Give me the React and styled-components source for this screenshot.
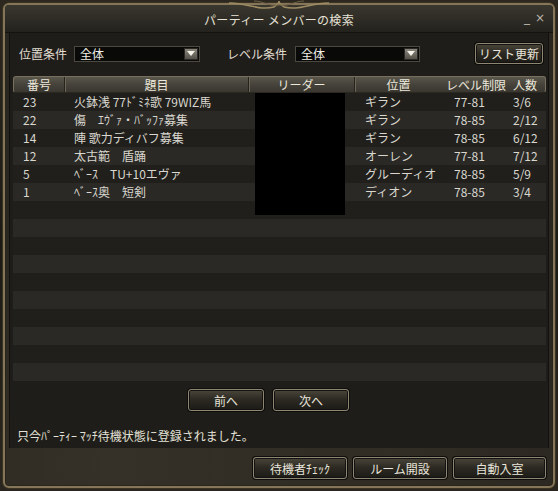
import React from "react";
import styled, { createGlobalStyle } from "styled-components";

const GlobalStyle = createGlobalStyle`
  html, body { margin: 0; padding: 0; background: #14120f; }
  body { font-family: "Noto Sans CJK JP", "Noto Sans", sans-serif; }
  * { box-sizing: border-box; }
`;

const Window = styled.div`
  width: 558px;
  height: 491px;
  padding: 3px;
  background: linear-gradient(180deg, #2c2820 0%, #1c1a15 50%, #2a261f 100%);
  position: relative;
`;

const Frame = styled.div`
  height: 100%;
  border: 2px solid #85765a;
  border-radius: 6px;
  box-shadow: inset 0 0 0 1px #2a251b, 0 0 0 1px #3a3222;
  display: flex;
  flex-direction: column;
  background:
    radial-gradient(ellipse at 20% 95%, rgba(90, 80, 60, 0.25), transparent 40%),
    radial-gradient(ellipse at 70% 92%, rgba(80, 70, 50, 0.2), transparent 40%),
    #2a2721;
`;

const TitleBar = styled.div`
  height: 28px;
  flex: none;
  display: flex;
  align-items: center;
  justify-content: center;
  position: relative;
  background: linear-gradient(180deg, #3a372f 0%, #24221d 100%);
  border-bottom: 1px solid #15130f;
  border-radius: 4px 4px 0 0;
`;

const Title = styled.div`
  color: #e6e2d6;
  font-size: 12px;
  letter-spacing: 0.3px;
  padding-top: 2px;
`;

const Ornament = styled.svg`
  position: absolute;
  left: 50%;
  top: -6px;
  transform: translateX(-50%);
`;

const WinControls = styled.div`
  position: absolute;
  right: 8px;
  top: 6px;
  display: flex;
  gap: 5px;
  align-items: flex-end;
  color: #b9b5a9;
  font-family: "DejaVu Sans", sans-serif;
  font-size: 12px;
  line-height: 14px;
`;

const Panel = styled.div`
  margin: 0 4px;
  height: 415px;
  flex: none;
  background: #1e1d1a;
  display: flex;
  flex-direction: column;
  border-left: 1px solid #121110;
  border-right: 1px solid #121110;
`;

const FilterRow = styled.div`
  display: flex;
  align-items: center;
  padding: 10px 5px 0 9px;
  height: 31px;
  flex: none;
`;

const Label = styled.span`
  color: #e2ded2;
  font-size: 12px;
  margin-left: ${(p) => p.$ml || 0}px;
  margin-right: ${(p) => p.$mr || 0}px;
  white-space: nowrap;
`;

const Select = styled.div`
  width: ${(p) => p.$w}px;
  height: 16px;
  background: #090908;
  border: 1px solid #4b4840;
  display: flex;
  align-items: center;
  justify-content: space-between;
  padding: 0 1px 0 5px;
  color: #f0eee6;
  font-size: 12px;
`;

const DropBtn = styled.div`
  width: 14px;
  height: 12px;
  background: linear-gradient(180deg, #8a867c, #55524a);
  border: 1px solid #2b2925;
  display: flex;
  align-items: center;
  justify-content: center;
`;

const Button = styled.div`
  width: ${(p) => p.$w}px;
  height: ${(p) => p.$h || 22}px;
  display: flex;
  align-items: center;
  justify-content: center;
  color: #e8e5da;
  font-size: 12px;
  border: 1px solid #8d8672;
  border-radius: 3px;
  background: linear-gradient(180deg, #4a463b 0%, #2e2b24 45%, #1c1a16 100%);
  box-shadow: inset 0 0 0 1px #141210, 0 0 0 1px #0e0d0b;
  margin-left: ${(p) => (p.$push ? "auto" : "0")};
  white-space: nowrap;
`;

const Table = styled.div`
  margin: 12px 2px 0 3px;
  position: relative;
  flex: none;
`;

const cols = "51px 184px 106px 87px 68px 39px";

const HeaderRow = styled.div`
  display: grid;
  grid-template-columns: ${cols};
  height: 17px;
  border: 1px solid #77705e;
  border-bottom-color: #2b2822;
  border-radius: 3px;
  background: linear-gradient(180deg, #5a564c 0%, #46433b 50%, #3a3731 100%);
`;

const HeadCell = styled.div`
  color: #ece8dc;
  font-size: 12px;
  line-height: 15px;
  text-align: ${(p) => p.$align || "center"};
  padding-left: ${(p) => p.$pl || 0}px;
  border-right: ${(p) => (p.$div ? "1px solid #26231e" : "none")};
  box-shadow: ${(p) => (p.$div ? "1px 0 0 #6c6656" : "none")};
  white-space: nowrap;
`;

const Row = styled.div`
  display: grid;
  grid-template-columns: ${cols};
  height: 18px;
  background: ${(p) => (p.$odd ? "#2a2926" : "#201f1c")};
`;

const Cell = styled.div`
  color: #d9d7ce;
  font-size: 12px;
  line-height: 18px;
  padding-left: ${(p) => p.$pl || 0}px;
  white-space: nowrap;
  overflow: hidden;
`;

const Censor = styled.div`
  position: absolute;
  left: 242px;
  top: 17px;
  width: 90px;
  height: 122px;
  background: #000;
`;

const Pager = styled.div`
  display: flex;
  gap: 9px;
  padding-left: 178px;
  margin-top: 8px;
  flex: none;
`;

const Status = styled.div`
  color: #e4e1d6;
  font-size: 12px;
  line-height: 16px;
  margin: 17px 0 0 7px;
`;

const Footer = styled.div`
  display: flex;
  justify-content: flex-end;
  gap: 6px;
  padding: 9px 7px 0 0;
`;

const rows = [
  ["23", "火鉢浅 77ﾄﾞﾐﾈ歌 79WIZ馬", "ギラン", "77-81", "3/6"],
  ["22", "傷　ｴｳﾞｧ・ﾊﾞｯﾌｧ募集", "ギラン", "78-85", "2/12"],
  ["14", "陣 歌力ディバフ募集", "ギラン", "78-85", "6/12"],
  ["12", "太古範　盾踊", "オーレン", "77-81", "7/12"],
  ["5", "ﾍﾞｰｽ　TU+10エヴァ", "グルーディオ", "78-85", "5/9"],
  ["1", "ﾍﾞｰｽ奥　短剣", "ディオン", "78-85", "3/4"],
];

const allRows = Array.from({ length: 16 }, (_, i) => rows[i] || ["", "", "", "", ""]);

const Arrow = () => (
  <svg width="8" height="5" viewBox="0 0 8 5">
    <path d="M0 0 H8 L4 5 Z" fill="#f4f2ea" />
  </svg>
);

export default function App() {
  return (
    <>
      <GlobalStyle />
      <Window>
        <Frame>
          <TitleBar>
            <Ornament width="120" height="14" viewBox="0 0 120 14">
              <path d="M10 4 C30 4 40 12 55 8 C58 6 60 4 60 2 C60 4 62 6 65 8 C80 12 90 4 110 4" stroke="#9c8a62" strokeWidth="1.5" fill="none" />
              <path d="M35 2 C45 2 50 8 60 6 C70 8 75 2 85 2" stroke="#6e6046" strokeWidth="1" fill="none" />
            </Ornament>
            <Title>パーティー メンバーの検索</Title>
            <WinControls>
              <span>_</span>
              <span>×</span>
            </WinControls>
          </TitleBar>
          <Panel>
            <FilterRow>
              <Label $mr={7}>位置条件</Label>
              <Select $w={126}>
                全体
                <DropBtn>
                  <Arrow />
                </DropBtn>
              </Select>
              <Label $ml={27} $mr={8}>レベル条件</Label>
              <Select $w={125}>
                全体
                <DropBtn>
                  <Arrow />
                </DropBtn>
              </Select>
              <Button $w={68} $h={21} $push>リスト更新</Button>
            </FilterRow>
            <Table>
              <HeaderRow>
                <HeadCell $div>番号</HeadCell>
                <HeadCell $div>題目</HeadCell>
                <HeadCell $div>リーダー</HeadCell>
                <HeadCell>位置</HeadCell>
                <HeadCell>レベル制限</HeadCell>
                <HeadCell $align="left" $pl={3}>人数</HeadCell>
              </HeaderRow>
              {allRows.map((r, i) => (
                <Row key={i} $odd={i % 2 === 1}>
                  <Cell $pl={10}>{r[0]}</Cell>
                  <Cell $pl={10}>{r[1]}</Cell>
                  <Cell />
                  <Cell $pl={11}>{r[2]}</Cell>
                  <Cell $pl={13}>{r[3]}</Cell>
                  <Cell $pl={4}>{r[4]}</Cell>
                </Row>
              ))}
              <Censor />
            </Table>
            <Pager>
              <Button $w={76}>前へ</Button>
              <Button $w={76}>次へ</Button>
            </Pager>
            <Status>只今ﾊﾟｰﾃｨｰ ﾏｯﾁ待機状態に登録されました。</Status>
          </Panel>
          <Footer>
            <Button $w={94}>待機者ﾁｪｯｸ</Button>
            <Button $w={94}>ルーム開設</Button>
            <Button $w={93}>自動入室</Button>
          </Footer>
        </Frame>
      </Window>
    </>
  );
}
